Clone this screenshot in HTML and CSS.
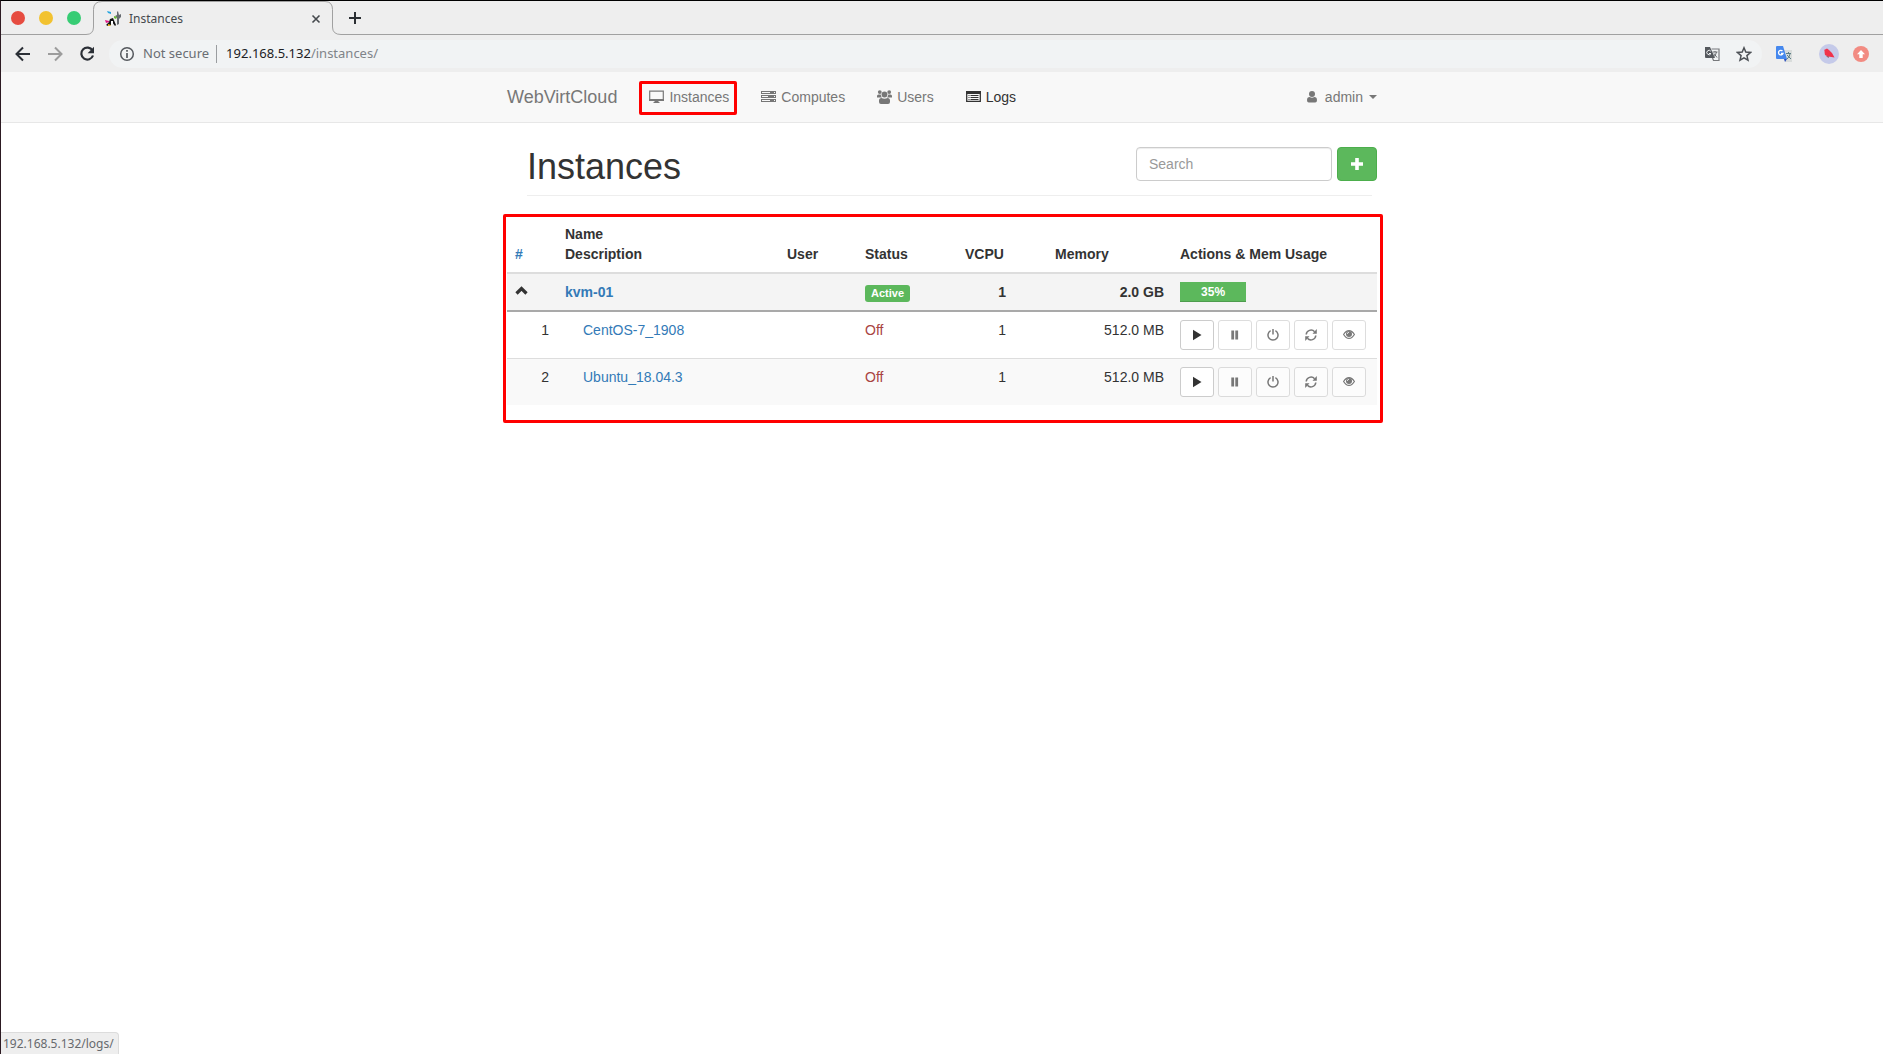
FILE: index.html
```html
<!DOCTYPE html>
<html lang="en">
<head>
<meta charset="utf-8">
<title>Instances</title>
<link rel="stylesheet" href="styles.css">
</head>
<body>
<svg class="sprite" aria-hidden="true">
  <symbol id="i-play" viewBox="0 0 12 12"><path d="M2 .8v10.400L10.500 6z"/></symbol>
  <symbol id="i-pause" viewBox="0 0 12 12"><path d="M2.300 1.500h2.800v9H2.300zM6.300 1.500h2.800v9H6.300z"/></symbol>
  <symbol id="i-off" viewBox="0 0 12 12"><path d="M3.600 1.700a5 5 0 1 0 4.800 0M6 0v5.500" fill="none" stroke="currentColor" stroke-width="1.500"/></symbol>
  <symbol id="i-refresh" viewBox="0 0 12 12"><path d="M1.200 5.500A4.800 4.800 0 0 1 9.600 2.800M10.800 6.500A4.800 4.800 0 0 1 2.400 9.200" fill="none" stroke="currentColor" stroke-width="1.500"/><path d="M11.800 0v4.800H7.500zM.2 12V7.200h4.300z"/></symbol>
  <symbol id="i-eye" viewBox="0 0 12 12"><path d="M.6 5.500Q3 1.600 6 1.600t5.400 3.900Q9 9.400 6 9.400T.6 5.500z" fill="none" stroke="currentColor" stroke-width="1.200"/><circle cx="6" cy="5" r="3"/><path d="M4.400 4.800Q4.500 3.400 5.900 3.300" fill="none" stroke="#fff" stroke-width=".9"/></symbol>
</svg>

<header class="browser">
  <div class="tabstrip">
    <div class="lights"><i class="red"></i><i class="yellow"></i><i class="green"></i></div>
    <svg class="edge" viewBox="0 0 16 34"><path d="M0 33.500q7.500 0 7.500-7.500V8.500Q7.500.5 16 .5"/></svg>
    <div class="tab">
      <svg width="16" height="16" viewBox="0 0 16 16"><path d="M2 0l4 1v2L3 2z" fill="#25a5e0"/><path d="M12 1l1-1 1 4 2-1v3l-2 2v5l-2 1V7l-2-2 2-1z" fill="#666b70"/><path d="M9 5l3 1-1 2-2-1z" fill="#6bbd35"/><path d="M5 8l3-1 3 7-1 1-3-4-1 3-3 1-2-1 3-3z" fill="#111"/><path d="M0 9l4 1v1L1 12z" fill="#e01787"/><path d="M3 13l3 1-1 1H3z" fill="#e8b52a"/><path d="M6 10h2v3l-2 1z" fill="#fff"/></svg>
      <span>Instances</span>
      <button class="plain" aria-label="Close tab"><svg width="10" height="10" viewBox="0 0 10 10"><path d="M1.500 1.500l7 7M8.500 1.500l-7 7" stroke="#45494d" stroke-width="1.600"/></svg></button>
    </div>
    <svg class="edge" viewBox="0 0 16 34"><path d="M16 33.500q-8.500 0-8.500-7.500V8.500Q7.500.5 0 .5"/></svg>
    <div class="strip-rest"><button class="plain" aria-label="New tab"><svg width="12" height="12" viewBox="0 0 12 12"><path d="M6 0v12M0 6h12" stroke="#2b2f33" stroke-width="2"/></svg></button></div>
  </div>
  <div class="toolbar">
    <div class="history">
      <button class="plain" aria-label="Back"><svg width="16" height="16" viewBox="0 0 16 16"><path d="M15 8H2M8 1.500L1.500 8 8 14.500" fill="none" stroke="#2b2f36" stroke-width="2"/></svg></button>
      <button class="plain" aria-label="Forward"><svg width="16" height="16" viewBox="0 0 16 16"><path d="M1 8h13M8 1.500L14.500 8 8 14.500" fill="none" stroke="#9c9c9c" stroke-width="2"/></svg></button>
      <button class="plain" aria-label="Reload"><svg width="16" height="16" viewBox="0 0 16 16"><path d="M13.500 4.500A6 6 0 1 0 14 9.500" fill="none" stroke="#2b2f36" stroke-width="2.200"/><path d="M15 .8v6.400H8.600z" fill="#2b2f36"/></svg></button>
    </div>
    <div class="omnibox">
      <svg width="16" height="16" viewBox="0 0 16 16"><circle cx="8" cy="8" r="6.300" fill="none" stroke="#55595e" stroke-width="1.500"/><path d="M8 7v5M8 4v1.800" stroke="#55595e" stroke-width="1.700"/></svg>
      <span class="secure">Not secure</span>
      <span class="url"><b>192.168.5.132</b>/instances/</span>
      <button class="plain" aria-label="Translate this page"><svg width="16" height="16" viewBox="0 0 16 16"><path d="M1 1h5l5 11H2q-1 0-1-1z" fill="#55595e"/><path d="M7.500 3H15v11.500H9.500L8.500 12" fill="none" stroke="#77797c" stroke-width="1.200"/><path d="M6.800 5.200A2.200 2.200 0 1 0 7 7.500H5" fill="none" stroke="#f1f3f4"/><path d="M8.500 6h5M11 5v1M12.500 6q-.5 3-3 5M10 7.500l3 4" fill="none" stroke="#66696c"/></svg></button>
      <button class="plain" aria-label="Bookmark"><svg width="16" height="16" viewBox="0 0 16 16"><path d="M8 1.800l1.800 4.300 4.700.4-3.600 3.100 1.100 4.600L8 11.800l-4 2.400 1.100-4.600-3.600-3.100 4.700-.4z" fill="none" stroke="#4d5156" stroke-width="1.500"/></svg></button>
    </div>
    <div class="extensions">
      <button class="plain translate" aria-label="Google Translate"><svg width="16" height="16" viewBox="0 0 16 16"><path d="M6 4h10v12H9z" fill="#d9dcdb"/><path d="M0 1q0-1 1-1h6l4 13H1q-1 0-1-1z" fill="#4688ee"/><path d="M8 13h3l-2 3z" fill="#2a4fbd"/><path d="M6.500 5A2.300 2.300 0 1 0 7 7.500H5" fill="none" stroke="#fff" stroke-width="1.300"/><path d="M10 7.500h5M12.500 6v1.500M14 8q-.5 3-3 5M11 9l4 4" fill="none" stroke="#5d7f86"/></svg></button>
      <button class="plain" aria-label="Profile"><svg width="20" height="20" viewBox="0 0 20 20"><circle cx="10" cy="10" r="10" fill="#c5cae9"/><path d="M5 6l3-1.500 2 1.500 3 3 2.500 4.500-3-.5-3.500-.5-3-1.500q-.5-2-.5-4.500z" fill="#f0324b"/><path d="M7 12l3 .5L9.500 14z" fill="#8a4a52"/></svg></button>
      <button class="plain" aria-label="Update"><svg width="16" height="16" viewBox="0 0 16 16"><circle cx="8" cy="8" r="8" fill="#f28b82"/><path d="M8 4l4 4.200H9.700V12H6.300V8.200H4z" fill="#fff"/></svg></button>
    </div>
  </div>
</header>

<nav class="navbar">
  <div class="container nav-inner">
    <a class="brand" href="#">WebVirtCloud</a>
    <a class="link marked" href="#"><svg width="15" height="14" viewBox="0 0 15 14"><path d="M.7 1.200h13.600v8.600H.7z" fill="none" stroke="currentColor" stroke-width="1.200"/><path d="M0 9h15v2H9.500v1h1v1h-6v-1h1v-1H0z"/></svg>Instances</a>
    <a class="link" href="#"><svg width="15" height="14" viewBox="0 0 15 14"><path d="M0 1h15v3H0zM0 5h15v3H0zM0 9h15v3H0z"/><path d="M1 2.500h8M1 6.500h6M1 10.500h8" stroke="#f8f8f8"/><path d="M13 2.500h1M13 6.500h1M13 10.500h1" stroke="#f8f8f8"/></svg>Computes</a>
    <a class="link" href="#"><svg width="15" height="14" viewBox="0 0 15 14"><circle cx="2.800" cy="2.100" r="1.900"/><circle cx="12.200" cy="2.100" r="1.900"/><circle cx="7.500" cy="4.500" r="2.900"/><path d="M0 7.500V6q0-1.500 1.500-1.500h2.200Q4 6.500 5 7.500zM15 7.500V6q0-1.500-1.500-1.500h-2.200Q11 6.500 10 7.500zM2 12v-1.500q0-2.500 2.500-2.500 3 1.500 6 0 2.500 0 2.500 2.500V12q0 2-2 2H4q-2 0-2-2z"/></svg>Users</a>
    <a class="link active" href="#"><svg width="15" height="14" viewBox="0 0 15 14"><path d="M.7 1.700h13.600v9.600H.7z" fill="none" stroke="currentColor" stroke-width="1.300"/><path d="M0 1h15v3H0z"/><path d="M2.500 5.500h1M4.500 5.500h8M2.500 7.500h1M4.500 7.500h8M2.500 9.500h1M4.500 9.500h8" stroke="currentColor"/></svg>Logs</a>
    <a class="link account" href="#"><svg width="10" height="14" viewBox="0 0 11 14"><circle cx="5.500" cy="3.800" r="3.300"/><path d="M0 10.500Q0 7 3 7q2.500 1.500 5 0 3 0 3 3.500Q11 13 9 13H2q-2 0-2-2.500z"/></svg><span>admin</span><i class="caret"></i></a>
  </div>
</nav>

<main class="container">
  <div class="page-head">
    <h1>Instances</h1>
    <form class="search">
      <input type="text" placeholder="Search" aria-label="Search">
      <button type="button" class="add" aria-label="Add instance"><svg width="14" height="14" viewBox="0 0 14 14"><path d="M5.200 1h3.600v4.200H13v3.600H8.800V13H5.200V8.800H1V5.200h4.200z" fill="#fff"/></svg></button>
    </form>
  </div>
  <div class="table-box">
    <table>
      <colgroup><col class="c-num"><col><col class="c-user"><col class="c-status"><col class="c-cpu"><col class="c-mem"><col class="c-act"></colgroup>
      <thead>
        <tr><th><a href="#">#</a></th><th>Name<br>Description</th><th>User</th><th>Status</th><th>VCPU</th><th>Memory</th><th>Actions &amp; Mem Usage</th></tr>
      </thead>
      <tbody>
        <tr class="host">
          <td><svg class="chevron" width="14" height="14" viewBox="0 0 14 14"><path d="M1.500 9.500l5-5 5 5" fill="none" stroke="#333" stroke-width="3.200"/></svg></td>
          <td><a href="#">kvm-01</a></td><td></td>
          <td><span class="label">Active</span></td>
          <td class="num cpu">1</td><td class="num">2.0 GB</td>
          <td><div class="progress"><div class="bar" style="width:35%">35%</div></div></td>
        </tr>
        <tr>
          <td class="num">1</td><td class="guest"><a href="#">CentOS-7_1908</a></td><td></td><td class="off">Off</td><td class="num cpu">1</td><td class="num">512.0 MB</td>
          <td><div class="actions">
            <button aria-label="Power on"><svg><use href="#i-play"/></svg></button>
            <button disabled aria-label="Suspend"><svg><use href="#i-pause"/></svg></button>
            <button disabled aria-label="Power off"><svg><use href="#i-off"/></svg></button>
            <button disabled aria-label="Power cycle"><svg><use href="#i-refresh"/></svg></button>
            <button disabled aria-label="Console"><svg><use href="#i-eye"/></svg></button>
          </div></td>
        </tr>
        <tr class="odd">
          <td class="num">2</td><td class="guest"><a href="#">Ubuntu_18.04.3</a></td><td></td><td class="off">Off</td><td class="num cpu">1</td><td class="num">512.0 MB</td>
          <td><div class="actions">
            <button aria-label="Power on"><svg><use href="#i-play"/></svg></button>
            <button disabled aria-label="Suspend"><svg><use href="#i-pause"/></svg></button>
            <button disabled aria-label="Power off"><svg><use href="#i-off"/></svg></button>
            <button disabled aria-label="Power cycle"><svg><use href="#i-refresh"/></svg></button>
            <button disabled aria-label="Console"><svg><use href="#i-eye"/></svg></button>
          </div></td>
        </tr>
      </tbody>
    </table>
  </div>
</main>
<div class="status">192.168.5.132/logs/</div>
</body>
</html>
```
FILE: styles.css
```css
* { box-sizing: border-box; }
body {
  margin: 0;
  min-height: 100vh;
  border-top: 1px solid #000;
  border-left: 1px solid #2c1a22;
  background: #fff;
  color: #333;
  font: 14px/20px "Liberation Sans", Arial, sans-serif;
}
a { color: #337ab7; text-decoration: none; }
svg { display: block; flex: none; fill: currentColor; }
.sprite { position: absolute; width: 0; height: 0; }
.plain { display: flex; padding: 0; border: 0; background: none; }

/* Browser frame */
.browser { background: #eee; font-family: "Noto Sans", sans-serif; }
.tabstrip { display: flex; height: 34px; }
.lights { display: flex; gap: 14px; padding: 10px 5px 0 10px; border-bottom: 1px solid #a0a0a0; }
.lights i { width: 14px; height: 14px; border-radius: 50%; }
.red { background: #e64c40; }
.yellow { background: #f2c230; }
.green { background: #37cc74; }
.edge { width: 16px; height: 34px; fill: none; stroke: #a0a0a0; }
.tab { display: flex; align-items: center; width: 223px; padding: 0 3px; border-top: 1px solid #a0a0a0; color: #45494d; font-size: 12px; }
.tab span { flex: 1; padding-left: 8px; }
.tab button { padding-right: 1px; }
.strip-rest { flex: 1; display: flex; align-items: center; padding-left: 8px; border-bottom: 1px solid #a0a0a0; }
.toolbar { display: flex; align-items: center; height: 37px; padding: 0 14px; }
.history { display: flex; gap: 16px; margin-right: 14px; }
.omnibox { flex: 1; display: flex; align-items: center; height: 28px; padding: 0 10px; border-radius: 14px; background: #f1f3f4; font-size: 13px; color: #808489; }
.secure, .url { line-height: 16px; padding-bottom: 2px; }
.secure { margin-left: 8px; padding-right: 7px; border-right: 1px solid #9a9da0; color: #6a6e73; }
.url { flex: 1; padding-left: 9px; }
.url b { font-weight: 400; color: #202124; }
.omnibox button + button { margin-left: 16px; }
.extensions { display: flex; align-items: center; gap: 14px; margin-left: 14px; }
.translate { margin-right: 13px; }

/* Navigation */
.container { max-width: 870px; margin: 0 auto; }
.navbar { background: #f8f8f8; border-bottom: 1px solid #e7e7e7; }
.nav-inner { display: flex; height: 50px; }
.brand { padding: 15px 15px 15px 0; font-size: 18px; color: #777; }
.link { position: relative; display: flex; align-items: center; gap: 5px; padding: 0 15px 0 17px; color: #777; }
.link.active { color: #333; }
.marked::after { content: ""; position: absolute; inset: 9px 7px 7px; border: 3px solid #f00; border-radius: 2px; }
.account { margin-left: auto; padding-right: 0; gap: 6px; }
.account span { padding-left: 2px; }
.caret { border: 4px solid transparent; border-top-color: currentColor; border-bottom: 0; }

/* Page heading */
.page-head { display: flex; justify-content: space-between; position: relative; margin: 23px 0 20px; height: 50px; padding-left: 20px; }
.page-head::after { content: ""; position: absolute; left: 20px; right: 5px; bottom: 0; border-bottom: 1px solid #eee; }
h1 { margin: 1px 0 0; font-size: 36px; line-height: 40px; font-weight: 400; }
.search { display: flex; gap: 5px; height: 34px; margin-top: 1px; }
.search input { width: 196px; padding: 6px 12px; border: 1px solid #ccc; border-radius: 4px; box-shadow: inset 0 1px 1px #00000013; font: inherit; color: #555; }
.search input::placeholder { color: #999; }
.add { display: flex; align-items: center; justify-content: center; width: 40px; padding: 0; border: 1px solid #4cae4c; border-radius: 4px; background: #5cb85c; }

/* Instance table */
.table-box { position: relative; }
.table-box::after { content: ""; position: absolute; inset: -2px -6px -18px -4px; border: 3px solid #f00; border-radius: 2px; pointer-events: none; }
table { width: 100%; table-layout: fixed; border-collapse: separate; border-spacing: 0; }
.c-num { width: 50px; }
.c-user { width: 78px; }
.c-status { width: 100px; }
.c-cpu { width: 90px; }
.c-mem { width: 125px; }
.c-act { width: 205px; }
th, td { padding: 8px; text-align: left; vertical-align: top; }
th { vertical-align: bottom; border-bottom: 2px solid #ddd; }
.host td { background: #f4f4f4; border-bottom: 2px solid #a9a9a9; font-weight: 700; }
.odd td { background: #f9f9f9; border-top: 1px solid #ddd; }
td.num { text-align: right; }
td.cpu { padding-right: 41px; }
td.guest { padding-left: 26px; }
.off { color: #a94442; }
.chevron { margin-top: 2px; }
.label { display: block; width: fit-content; margin-top: 3px; padding: 0 6px; border-radius: 3px; background: #5cb85c; color: #fff; font-size: 11px; line-height: 17px; }
.progress { height: 20px; }
.bar { height: 20px; background: #5cb85c; box-shadow: inset 0 -1px 0 #00000026; color: #fff; font-size: 12px; text-align: center; }
.actions { display: flex; gap: 4px; }
.actions button { display: flex; align-items: center; justify-content: center; width: 34px; height: 30px; padding: 0; border: 1px solid #ccc; border-radius: 3px; background: #fff; color: #333; }
.actions button:disabled { opacity: .65; }
.actions svg { width: 12px; height: 12px; }

/* Link preview */
.status { position: fixed; left: 1px; bottom: 0; padding: 1px 4px 0 2px; border: 1px solid #dcdcdc; border-width: 1px 1px 0 0; border-top-right-radius: 4px; background: #eee; color: #66696d; font: 12px/20px "Noto Sans", sans-serif; }
```
